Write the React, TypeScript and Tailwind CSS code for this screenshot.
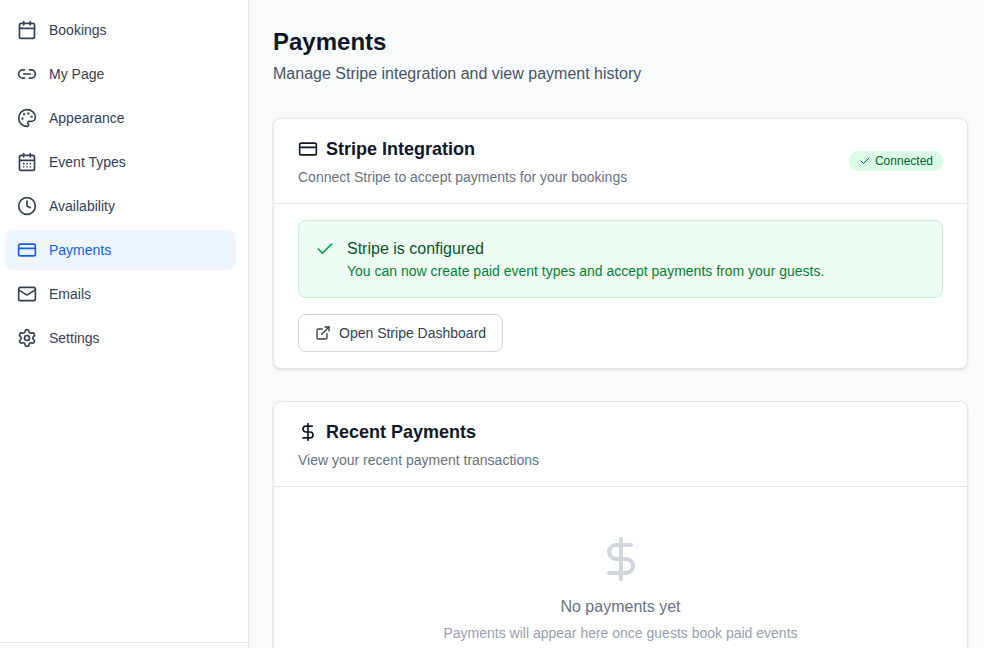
import React from 'react';
import {
  Calendar,
  CalendarDays,
  Check,
  Clock,
  CreditCard,
  DollarSign,
  ExternalLink,
  Link2,
  Mail,
  Palette,
  Settings,
  type LucideIcon,
} from 'lucide-react';

interface NavItem {
  label: string;
  href: string;
  icon: LucideIcon;
}

const navItems: NavItem[] = [
  { label: 'Bookings', href: '#bookings', icon: Calendar },
  { label: 'My Page', href: '#my-page', icon: Link2 },
  { label: 'Appearance', href: '#appearance', icon: Palette },
  { label: 'Event Types', href: '#event-types', icon: CalendarDays },
  { label: 'Availability', href: '#availability', icon: Clock },
  { label: 'Payments', href: '#payments', icon: CreditCard },
  { label: 'Emails', href: '#emails', icon: Mail },
  { label: 'Settings', href: '#settings', icon: Settings },
];

function Sidebar({ active }: { active: string }) {
  return (
    <aside className="flex w-[249px] shrink-0 flex-col border-r border-gray-200 bg-white">
      <nav className="flex-1 space-y-1 overflow-hidden pt-[10px] pr-3 pl-[5px]">
        {navItems.map(({ label, href, icon: Icon }) => (
          <a
            key={label}
            href={href}
            aria-current={label === active ? 'page' : undefined}
            className={`flex items-center gap-3 rounded-lg px-3 py-[10px] text-sm leading-5 ${
              label === active ? 'bg-blue-50 text-blue-600' : 'text-gray-700 hover:bg-gray-50'
            }`}
          >
            <Icon className="h-5 w-5" />
            {label}
          </a>
        ))}
      </nav>
      {/* Sidebar footer */}
      <div className="h-[6px] border-t border-gray-200" />
    </aside>
  );
}

interface CardProps {
  title: string;
  description: string;
  icon: LucideIcon;
  badge?: React.ReactNode;
  children: React.ReactNode;
}

function Card({ title, description, icon: Icon, badge, children }: CardProps) {
  return (
    <section className="rounded-lg border border-gray-200 bg-white shadow-sm">
      <div className="flex items-center justify-between border-b border-gray-200 px-6 py-4">
        <div>
          <h2 className="flex items-center gap-2 text-lg leading-7 font-semibold text-gray-900">
            <Icon className="h-5 w-5" />
            {title}
          </h2>
          <p className="mt-1 text-sm text-gray-500">{description}</p>
        </div>
        {badge}
      </div>
      {children}
    </section>
  );
}

export default function App() {
  return (
    <div className="flex h-screen overflow-hidden bg-gray-50 font-['Liberation_Sans',Arial,sans-serif]">
      <Sidebar active="Payments" />

      <main className="min-w-0 flex-1 overflow-hidden pt-[26px] pr-4 pl-6">
        <h1 className="text-2xl leading-8 font-bold text-gray-900">Payments</h1>
        <p className="mt-1 text-base leading-6 text-gray-600">Manage Stripe integration and view payment history</p>

        <div className="mt-8 space-y-8">
          <Card
            title="Stripe Integration"
            description="Connect Stripe to accept payments for your bookings"
            icon={CreditCard}
            badge={
              <span className="flex items-center gap-1 rounded-full bg-green-100 px-[10px] py-[2px] text-xs text-green-800">
                <Check className="h-3 w-3" />
                Connected
              </span>
            }
          >
            <div className="px-6 py-4">
              <div className="flex items-start gap-3 rounded-lg border border-green-200 bg-green-50 p-4">
                <Check className="mt-[2px] h-5 w-5 text-green-600" />
                <div>
                  <p className="text-base leading-6 text-green-900">Stripe is configured</p>
                  <p className="text-sm leading-5 text-green-700">
                    You can now create paid event types and accept payments from your guests.
                  </p>
                </div>
              </div>
              <button
                type="button"
                className="mt-4 flex cursor-pointer items-center gap-2 rounded-lg border border-gray-300 bg-white px-4 py-2 text-sm text-gray-700 hover:bg-gray-50"
              >
                <ExternalLink className="h-4 w-4" />
                Open Stripe Dashboard
              </button>
            </div>
          </Card>

          <Card title="Recent Payments" description="View your recent payment transactions" icon={DollarSign}>
            <div className="px-6 py-12 text-center">
              <DollarSign className="mx-auto mb-3 h-12 w-12 text-gray-300" />
              <p className="text-base text-gray-500">No payments yet</p>
              <p className="mt-1 text-sm text-gray-400">Payments will appear here once guests book paid events</p>
            </div>
          </Card>
        </div>
      </main>
    </div>
  );
}
